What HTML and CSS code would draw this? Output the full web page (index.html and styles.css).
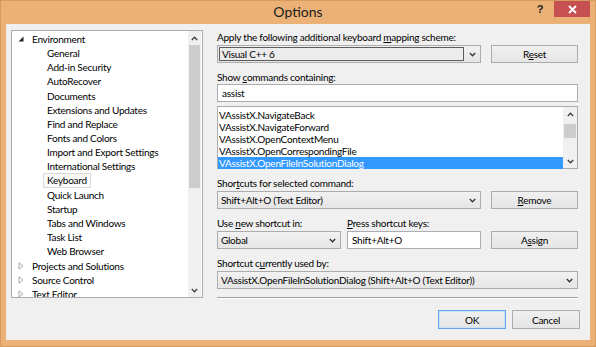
FILE: index.html
```html
<!DOCTYPE html>
<html lang="en">
<head>
    <meta charset="UTF-8">
    <title>Options</title>
    <link rel="stylesheet" href="styles.css">
</head>
<body>
    <div class="window">
        <div class="titlebar">
            <span></span>
            <span class="title">Options</span>
            <div class="caption-btns">
                <span class="help">?</span>
                <span class="close">
                    <svg width="9" height="9" viewBox="0 0 9 9"><path d="M1 1L8 8M8 1L1 8" stroke="#fff" stroke-width="1.8"/></svg>
                </span>
            </div>
        </div>

        <div class="client">
            <div class="tree">
                <div class="tree-items">
                    <div class="node"><span class="exp"><svg width="6" height="6" viewBox="0 0 6 6"><path d="M5.5 0.5V5.5H0.5Z" fill="#262626"/></svg></span>Environment</div>
                    <div class="node child">General</div>
                    <div class="node child">Add-in Security</div>
                    <div class="node child">AutoRecover</div>
                    <div class="node child">Documents</div>
                    <div class="node child">Extensions and Updates</div>
                    <div class="node child">Find and Replace</div>
                    <div class="node child">Fonts and Colors</div>
                    <div class="node child">Import and Export Settings</div>
                    <div class="node child">International Settings</div>
                    <div class="node child"><span class="current">Keyboard</span></div>
                    <div class="node child">Quick Launch</div>
                    <div class="node child">Startup</div>
                    <div class="node child">Tabs and Windows</div>
                    <div class="node child">Task List</div>
                    <div class="node child">Web Browser</div>
                    <div class="node"><span class="exp"><svg width="6" height="8" viewBox="0 0 6 8"><path d="M1 0.8L4.8 4L1 7.2Z" fill="none" stroke="#a6a6a6"/></svg></span>Projects and Solutions</div>
                    <div class="node"><span class="exp"><svg width="6" height="8" viewBox="0 0 6 8"><path d="M1 0.8L4.8 4L1 7.2Z" fill="none" stroke="#a6a6a6"/></svg></span>Source Control</div>
                    <div class="node"><span class="exp"><svg width="6" height="8" viewBox="0 0 6 8"><path d="M1 0.8L4.8 4L1 7.2Z" fill="none" stroke="#a6a6a6"/></svg></span>Text Editor</div>
                </div>
                <div class="vscroll tree-scroll">
                    <span class="arrow"><svg width="7" height="5" viewBox="0 0 7 5"><path d="M0.8 4L3.5 1.2L6.2 4" fill="none" stroke="#404040" stroke-width="1.3"/></svg></span>
                    <span class="thumb"></span>
                    <span class="track"></span>
                    <span class="arrow"><svg width="7" height="5" viewBox="0 0 7 5"><path d="M0.8 1L3.5 3.8L6.2 1" fill="none" stroke="#404040" stroke-width="1.3"/></svg></span>
                </div>
            </div>

            <div class="pane">
                <div class="lbl">Apply the following additional keyboard <u>m</u>apping scheme:</div>
                <div class="row">
                    <div class="combo editable">
                        <span class="field">Visual C++ 6</span>
                        <span class="drop"><svg width="7" height="5" viewBox="0 0 7 5"><path d="M0.8 1L3.5 3.8L6.2 1" fill="none" stroke="#333" stroke-width="1.3"/></svg></span>
                    </div>
                    <button class="btn">R<u>e</u>set</button>
                </div>

                <div class="lbl">Show <u>c</u>ommands containing:</div>
                <div class="textbox">assist</div>

                <div class="listbox">
                    <div class="list-items">
                        <div class="item">VAssistX.NavigateBack</div>
                        <div class="item">VAssistX.NavigateForward</div>
                        <div class="item">VAssistX.OpenContextMenu</div>
                        <div class="item">VAssistX.OpenCorrespondingFile</div>
                        <div class="item selected">VAssistX.OpenFileInSolutionDialog</div>
                    </div>
                    <div class="vscroll list-scroll">
                        <span class="arrow"><svg width="7" height="5" viewBox="0 0 7 5"><path d="M0.8 4L3.5 1.2L6.2 4" fill="none" stroke="#404040" stroke-width="1.3"/></svg></span>
                        <span class="track small"></span>
                        <span class="thumb"></span>
                        <span class="track"></span>
                        <span class="arrow"><svg width="7" height="5" viewBox="0 0 7 5"><path d="M0.8 1L3.5 3.8L6.2 1" fill="none" stroke="#404040" stroke-width="1.3"/></svg></span>
                    </div>
                </div>

                <div class="lbl spaced">Shor<u>t</u>cuts for selected command:</div>
                <div class="row">
                    <div class="combo">
                        <span class="value">Shift+Alt+O (Text Editor)</span>
                        <span class="drop"><svg width="7" height="5" viewBox="0 0 7 5"><path d="M0.8 1L3.5 3.8L6.2 1" fill="none" stroke="#333" stroke-width="1.3"/></svg></span>
                    </div>
                    <button class="btn"><u>R</u>emove</button>
                </div>

                <div class="lbl spaced lbl-pair">
                    <span class="lbl-left">Use <u>n</u>ew shortcut in:</span>
                    <span><u>P</u>ress shortcut keys:</span>
                </div>
                <div class="row">
                    <div class="combo scope">
                        <span class="value">Global</span>
                        <span class="drop"><svg width="7" height="5" viewBox="0 0 7 5"><path d="M0.8 1L3.5 3.8L6.2 1" fill="none" stroke="#333" stroke-width="1.3"/></svg></span>
                    </div>
                    <div class="textbox keys">Shift+Alt+O</div>
                    <button class="btn">A<u>s</u>sign</button>
                </div>

                <div class="lbl spaced">Shortcut c<u>u</u>rrently used by:</div>
                <div class="combo wide">
                    <span class="value">VAssistX.OpenFileInSolutionDialog (Shift+Alt+O (Text Editor))</span>
                    <span class="drop"><svg width="7" height="5" viewBox="0 0 7 5"><path d="M0.8 1L3.5 3.8L6.2 1" fill="none" stroke="#333" stroke-width="1.3"/></svg></span>
                </div>

                <div class="separator"></div>

                <div class="footer">
                    <button class="btn btn-default">OK</button>
                    <button class="btn btn-footer">Cancel</button>
                </div>
            </div>
        </div>
    </div>
</body>
</html>
```

FILE: styles.css
```css
:root {
    --frame-color: #ebb176;
    --client-bg: #f0f0f0;
    --control-border: #acacac;
    --text-border: #abadb3;
    --select-color: #3399ff;
    --text-color: #000;
}

* {
    margin: 0;
    padding: 0;
    box-sizing: border-box;
}

body {
    font-family: Lato, 'Liberation Sans', sans-serif;
    font-size: 10px;
    letter-spacing: -0.25px;
    color: var(--text-color);
    background-color: var(--frame-color);
}

.window {
    width: 596px;
    height: 347px;
    display: flex;
    flex-direction: column;
    background-color: var(--frame-color);
    box-shadow: inset 0 0 0 1px #d69b5f;
}

.titlebar {
    height: 24px;
    display: grid;
    grid-template-columns: 1fr auto 1fr;
    align-items: start;
}

.title {
    font-size: 14px;
    letter-spacing: 0;
    line-height: 24px;
    color: #1c1c1c;
}

.caption-btns {
    display: flex;
    justify-content: flex-end;
    align-items: center;
    padding-right: 6px;
    padding-top: 1px;
}

.help {
    font-family: 'Liberation Sans', sans-serif;
    font-weight: bold;
    font-size: 11px;
    color: #222;
    width: 20px;
    margin-right: 4px;
    text-align: center;
}

.close {
    width: 36px;
    height: 16px;
    background-color: #c75050;
    display: flex;
    align-items: center;
    justify-content: center;
}

.client {
    flex: 1;
    margin: 0 6px 7px 6px;
    background-color: var(--client-bg);
    display: flex;
    gap: 14px;
    padding: 6px 0 0 5px;
}

/* tree on the left */
.tree {
    width: 192px;
    height: 268px;
    border: 1px solid #a9abb0;
    background: #fff;
    display: flex;
    overflow: hidden;
}

.tree-items {
    flex: 1;
    padding-top: 1px;
    overflow: hidden;
}

.node {
    height: 14.17px;
    line-height: 14.17px;
    padding-left: 20px;
    white-space: nowrap;
    display: flex;
    align-items: center;
}

.node.child {
    padding-left: 35px;
}

.exp {
    width: 20px;
    margin-left: -20px;
    display: flex;
    justify-content: center;
    padding-right: 2px;
}

.current {
    border: 1px solid #dadada;
    background: #fafafa;
    padding: 0 3px;
    margin-left: -4px;
    line-height: 13px;
}

.vscroll {
    width: 14px;
    display: flex;
    flex-direction: column;
    background: #f0f0f0;
}

.tree-scroll {
    width: 13px;
    margin-right: 1px;
}

.vscroll .arrow {
    height: 14px;
    display: flex;
    align-items: center;
    justify-content: center;
}

.tree-scroll .thumb {
    height: 143px;
    background: #cdcdcd;
    margin: 0 1px;
}

.vscroll .track {
    flex: 1;
}

.vscroll .track.small {
    flex: none;
    height: 3px;
}

/* right side */
.pane {
    width: 361px;
    display: flex;
    flex-direction: column;
}

.lbl {
    height: 15px;
    line-height: 15px;
    white-space: nowrap;
}

.pane > .lbl:not(:first-child) {
    margin-top: 7px;
    height: 14px;
    line-height: 14px;
}

.pane > .lbl.spaced {
    height: 15px;
    line-height: 15px;
}

.lbl-pair {
    display: flex;
}

.lbl-left {
    width: 130px;
}

.row {
    display: flex;
    gap: 10px;
    height: 18px;
    flex: none;
}

.combo {
    flex: 1;
    height: 18px;
    border: 1px solid var(--control-border);
    background: linear-gradient(#f2f2f2, #e5e5e5);
    display: flex;
    align-items: center;
    min-width: 0;
}

.combo.wide {
    flex: none;
}

.combo .value {
    flex: 1;
    padding-left: 3px;
    white-space: nowrap;
    overflow: hidden;
}

.combo .drop {
    width: 16px;
    display: flex;
    justify-content: center;
    align-items: center;
}

.combo.editable {
    padding: 1px 0 1px 1px;
}

.combo.editable .field {
    flex: 1;
    height: 100%;
    border: 1px solid #5c5c5c;
    background: #ececec;
    padding-left: 2px;
    line-height: 13px;
}

.combo.scope {
    flex: none;
    width: 124px;
}

.btn {
    width: 87px;
    height: 18px;
    border: 1px solid var(--control-border);
    background: linear-gradient(#f0f0f0, #e5e5e5);
    font-family: inherit;
    font-size: 10px;
    letter-spacing: -0.25px;
    color: var(--text-color);
}

.textbox {
    height: 18px;
    border: 1px solid var(--text-border);
    background: #fff;
    line-height: 16px;
    padding-left: 4px;
}

.textbox.keys {
    flex: 1;
    margin-left: -4px;
}

.listbox {
    margin-top: 4px;
    height: 63px;
    border: 1px solid #a9abb0;
    background: #fff;
    display: flex;
}

.list-items {
    flex: 1;
    padding-top: 2px;
}

.item {
    height: 12px;
    line-height: 12px;
    padding-left: 1px;
}

.item.selected {
    background: var(--select-color);
    color: #fff;
}

.list-scroll .thumb {
    height: 14px;
    background: #cdcdcd;
    margin: 0 1px;
}

.separator {
    margin-top: 8px;
    border-top: 1px solid #a0a0a0;
    border-bottom: 1px solid #fff;
}

.footer {
    margin-top: 11px;
    display: flex;
    justify-content: flex-end;
    gap: 6px;
    margin-right: -2px;
}

.btn-default,
.btn-footer {
    width: 68px;
    height: 19px;
}

.btn-default {
    border-color: #5fa2e3;
    box-shadow: inset 0 0 0 1px #cfe4f8;
}
```
